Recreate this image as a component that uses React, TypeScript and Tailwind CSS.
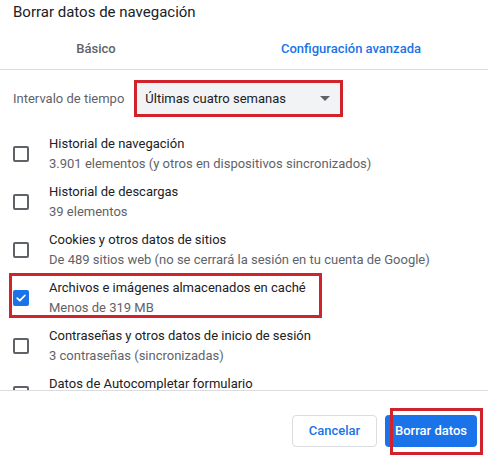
import { ChevronDown } from 'lucide-react';

interface Item {
  title: string;
  detail: string;
  checked?: boolean;
}

const items: Item[] = [
  { title: 'Historial de navegación', detail: '3.901 elementos (y otros en dispositivos sincronizados)' },
  { title: 'Historial de descargas', detail: '39 elementos' },
  { title: 'Cookies y otros datos de sitios', detail: 'De 489 sitios web (no se cerrará la sesión en tu cuenta de Google)' },
  { title: 'Archivos e imágenes almacenados en caché', detail: 'Menos de 319 MB', checked: true },
  { title: 'Contraseñas y otros datos de inicio de sesión', detail: '3 contraseñas (sincronizadas)' },
  { title: 'Datos de Autocompletar formulario', detail: '' },
];

const Checkbox = ({ checked }: { checked?: boolean }) =>
  checked ? (
    <div className="w-[16px] h-[16px] shrink-0 rounded-[2px] bg-[#1a73e8] flex items-center justify-center">
      <svg width="12" height="12" viewBox="0 0 12 12" fill="none">
        <path d="M2.2 6.2 4.8 8.7 9.8 3.5" stroke="white" strokeWidth="1.8" strokeLinecap="round" strokeLinejoin="round" />
      </svg>
    </div>
  ) : (
    <div className="w-[16px] h-[16px] shrink-0 rounded-[2px] border-2 border-[#5f6368]" />
  );

export default function App() {
  return (
    <div className="relative w-[488px] h-[460px] bg-white overflow-hidden font-['Roboto',sans-serif] text-[13px] text-[#202124]">
      <h1 className="pt-[2px] pl-[13px] text-[15px] leading-[20px] text-[#202124]">Borrar datos de navegación</h1>

      <div className="mt-[7px] flex h-[41px] border-b border-[#dadce0]">
        <div className="w-[192px] flex items-center justify-center font-medium text-[#5f6368]">Básico</div>
        <div className="ml-[29px] w-[260px] flex items-center justify-center font-medium text-[#1a73e8]">
          Configuración avanzada
        </div>
      </div>

      <div className="h-[320px] overflow-hidden">
        <div className="pt-[10px] pl-[13px] flex items-center gap-[10px]">
          <span className="text-[#5f6368]">Intervalo de tiempo</span>
          <div className="w-[209px] h-[37px] border-[3px] border-[#d0232b] bg-[#f1f3f4] flex items-center justify-between pl-[8px] pr-[10px]">
            <span className="text-[#202124]">Últimas cuatro semanas</span>
            <svg width="10" height="5" viewBox="0 0 10 5">
              <path d="M0 0h10L5 5z" fill="#5f6368" />
            </svg>
          </div>
        </div>

        <div className="mt-[17px] flex flex-col gap-[8px]">
          {items.map((item) => (
            <div key={item.title} className="flex items-center h-[40px] pl-[13px] gap-[20px]">
              <Checkbox checked={item.checked} />
              <div className="leading-[20px]">
                <div className="text-[#202124]">{item.title}</div>
                <div className="min-h-[20px] text-[#5f6368]">{item.detail}</div>
              </div>
            </div>
          ))}
        </div>
      </div>

      <div className="border-t border-[#dadce0] pt-[24px] pr-[11px] flex justify-end gap-[8px]">
        <button className="h-[32px] w-[85px] rounded-[4px] border border-[#dadce0] bg-white font-medium text-[#1a73e8]">
          Cancelar
        </button>
        <button className="h-[32px] w-[92px] rounded-[4px] bg-[#1a73e8] font-medium text-white">Borrar datos</button>
      </div>

      <div className="absolute left-[9px] top-[273px] w-[313px] h-[45px] border-[3px] border-[#d0232b] pointer-events-none" />
      <div className="absolute left-[390px] top-[408px] w-[93px] h-[47px] border-[3px] border-[#d0232b] pointer-events-none" />
    </div>
  );
}
